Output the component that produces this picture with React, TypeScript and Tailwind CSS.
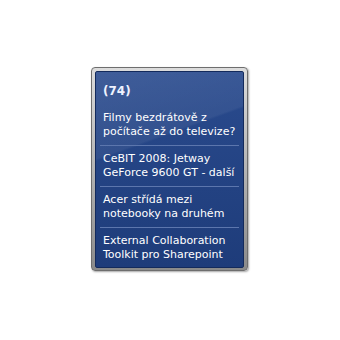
import React from "react";

const items = [
  ["Filmy bezdrátově z", "počítače až do televize?"],
  ["CeBIT 2008: Jetway", "GeForce 9600 GT - další"],
  ["Acer střídá mezi", "notebooky na druhém"],
  ["External Collaboration", "Toolkit pro Sharepoint"],
];

export default function App() {
  return (
    <div className="w-[340px] h-[340px] bg-white pl-[91px] pt-[67px]" style={{ fontFamily: '"DejaVu Sans", sans-serif' }}>
      <div className="w-[157px] h-[204px] rounded-[4px] border border-[#6e6e6e] bg-gradient-to-b from-[#dcdcdc] via-[#b4b4b4] to-[#8a8a8a] pt-[3px] pl-[3px] pr-[3px] pb-[2px] shadow-[1px_1px_2px_rgba(0,0,0,0.35)]">
        <div className="relative h-full overflow-hidden rounded-[2px] border border-[#132a5c] bg-gradient-to-b from-[#2a4b8e] to-[#1e3c7a]">
          <div className="absolute inset-0 bg-[linear-gradient(160deg,rgba(255,255,255,0.10)_0%,rgba(255,255,255,0.06)_35%,rgba(255,255,255,0)_36%)]" />
          <div className="relative px-[4px] text-[11px] leading-[14px] text-white">
            <div className="pl-[3px] pt-[12px] text-[12px] font-bold text-[#eef2ff]">(74)</div>
            {items.map((it, i) => (
              <div key={i} className={i < items.length - 1 ? "border-b border-[#5c76ad]" : ""}>
                <div className={"pl-[3px] pb-[6px] " + (i === 0 ? "pt-[13px]" : "pt-[6px]")}>
                  <div className="whitespace-nowrap">{it[0]}</div>
                  <div className="whitespace-nowrap">{it[1]}</div>
                </div>
              </div>
            ))}
          </div>
        </div>
      </div>
    </div>
  );
}
